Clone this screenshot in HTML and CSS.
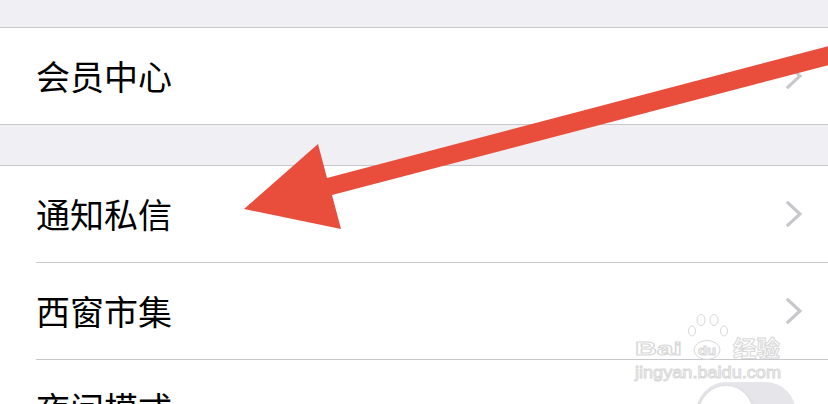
FILE: index.html
```html
<!DOCTYPE html>
<html lang="zh-CN">
<head>
<meta charset="utf-8">
<title>设置</title>
<link rel="stylesheet" href="styles.css">
</head>
<body>
<div class="page">
  <div class="gap gap-top"></div>
  <section class="group">
    <div class="row">
      <span class="label">会员中心</span>
      <svg class="chevron" viewBox="0 0 16 26" width="16" height="26"><polyline points="2,2 14,13 2,24"/></svg>
    </div>
  </section>
  <div class="gap gap-mid"></div>
  <section class="group">
    <div class="row">
      <span class="label">通知私信</span>
      <svg class="chevron" viewBox="0 0 16 26" width="16" height="26"><polyline points="2,2 14,13 2,24"/></svg>
    </div>
    <div class="row">
      <span class="label">西窗市集</span>
      <svg class="chevron" viewBox="0 0 16 26" width="16" height="26"><polyline points="2,2 14,13 2,24"/></svg>
    </div>
    <div class="row">
      <span class="label">夜间模式</span>
      <span class="switch"><span class="knob"></span></span>
    </div>
  </section>

  <svg class="overlay" viewBox="0 0 828 404" width="828" height="404">
    <polygon class="arrow" points="244,209 318,144 327,178 840,43 840,62 332,195 341,229"/>
    <g class="wm">
      <text class="wm-latin" x="635" y="355" font-size="19" textLength="47" lengthAdjust="spacingAndGlyphs">Bai</text>
      <ellipse cx="707" cy="350" rx="13" ry="9.5"/>
      <ellipse cx="692" cy="331" rx="3.5" ry="5"/>
      <ellipse cx="701" cy="320" rx="4" ry="5.5"/>
      <ellipse cx="714" cy="320" rx="4" ry="5.5"/>
      <ellipse cx="724" cy="331" rx="3.5" ry="5"/>
      <text class="wm-du" x="698" y="355" font-size="13" textLength="18" lengthAdjust="spacingAndGlyphs">du</text>
      <text class="wm-cjk" x="733" y="356" font-size="22" textLength="47" lengthAdjust="spacingAndGlyphs">经验</text>
      <text class="wm-url" x="635" y="378" font-size="17" textLength="146" lengthAdjust="spacingAndGlyphs">jingyan.baidu.com</text>
    </g>
  </svg>
</div>
</body>
</html>
```

FILE: styles.css
```css
html, body {
  margin: 0;
  padding: 0;
}

body {
  background: #efeff4;
  font-family: "Noto Sans CJK SC", "Noto Sans", sans-serif;
  overflow: hidden;
}

.page {
  position: relative;
  width: 828px;
  height: 404px;
  overflow: hidden;
}

.gap-top {
  height: 27px;
}

.gap-mid {
  height: 40px;
}

.group {
  background: #ffffff;
  border-top: 1px solid #c8c7cc;
  border-bottom: 1px solid #c8c7cc;
}

.row {
  display: flex;
  align-items: center;
  justify-content: space-between;
  height: 96px;
  margin-left: 36px;
  padding-right: 26px;
  border-bottom: 1px solid #c8c7cc;
}

.row:last-child {
  border-bottom: none;
}

.label {
  font-size: 34px;
  color: #000000;
  line-height: 1;
}

.chevron {
  display: block;
}

.chevron polyline {
  fill: none;
  stroke: #c7c7cc;
  stroke-width: 3.2;
  stroke-linecap: square;
  stroke-linejoin: miter;
}

.switch {
  position: relative;
  display: block;
  width: 100px;
  height: 62px;
  margin-top: 10px;
  margin-right: 6px;
  border-radius: 31px;
  background: #e5e5ea;
}

.knob {
  position: absolute;
  left: 3px;
  top: 4px;
  width: 54px;
  height: 54px;
  border-radius: 50%;
  background: #ffffff;
  box-shadow: 0 2px 4px rgba(0, 0, 0, 0.18);
}

.overlay {
  position: absolute;
  left: 0;
  top: 0;
  display: block;
}

.arrow {
  fill: #e94e3d;
}

.wm {
  opacity: 0.9;
}

.wm ellipse,
.wm text {
  fill: rgba(255, 255, 255, 0.6);
  stroke: #d4d4d4;
  stroke-width: 1;
}

.wm-latin,
.wm-du,
.wm-url {
  font-family: "Liberation Sans", Arial, sans-serif;
  font-weight: bold;
}

.wm-url {
  font-weight: normal;
}

.wm-cjk {
  font-family: "Noto Sans CJK SC", sans-serif;
  font-weight: bold;
}
```
